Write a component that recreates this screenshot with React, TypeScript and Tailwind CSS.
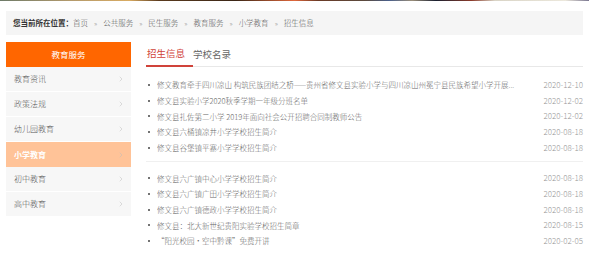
import { ChevronRight } from "lucide-react";

const crumbs = ["首页", "公共服务", "民生服务", "教育服务", "小学教育", "招生信息"];

const menu = ["教育资讯", "政策法规", "幼儿园教育", "小学教育", "初中教育", "高中教育"];

const groupA = [
  ["修文教育牵手四川凉山 构筑民族团结之桥——贵州省修文县实验小学与四川凉山州冕宁县民族希望小学开展...", "2020-12-10"],
  ["修文县实验小学2020秋季学期一年级分班名单", "2020-12-02"],
  ["修文县扎佐第二小学 2019年面向社会公开招聘合同制教师公告", "2020-12-02"],
  ["修文县六桶镇凉井小学学校招生简介", "2020-08-18"],
  ["修文县谷堡镇平寨小学学校招生简介", "2020-08-18"],
];

const groupB = [
  ["修文县六广镇中心小学学校招生简介", "2020-08-18"],
  ["修文县六广镇广田小学学校招生简介", "2020-08-18"],
  ["修文县六广镇德政小学学校招生简介", "2020-08-18"],
  ["修文县：北大新世纪贵阳实验学校招生简章", "2020-08-15"],
  ["“阳光校园·空中黔课”免费开讲", "2020-02-05"],
];

function NewsRow({ title, date }: { title: string; date: string }) {
  return (
    <li className="flex h-[15.7px] items-center">
      <span className="ml-[2px] mr-[7px] size-[2px] shrink-0 rounded-full bg-[#444]" />
      <span className="min-w-0 flex-1 truncate text-[7.5px] font-light text-[#666]">{title}</span>
      <span className="shrink-0 pl-4 text-[8px] font-light text-[#999]">{date}</span>
    </li>
  );
}

export default function App() {
  return (
    <div className="h-[255px] w-[589px] overflow-hidden bg-white font-['Noto_Sans_CJK_SC','Noto_Sans',sans-serif]">
      <div className="h-px bg-[linear-gradient(90deg,#6d7a68_0%,#b49a6c_12%,#d9ab62_22%,#5a3a1e_27%,#3b2616_40%,#e0683c_50%,#6a3a26_54%,#5b4a3e_62%,#4a5f8a_66%,#9a8e7a_70%,#1a2030_74%,#8a3a2a_80%,#d9d4c6_84%,#ece8dc_96%,#7a7690_100%)]" />

      <div className="mx-[6px] mt-[10px] flex h-6 items-center bg-[#f5f5f5] px-[7px] text-[7.5px]">
        <span className="font-bold text-[#333]">您当前所在位置：</span>
        {crumbs.map((c, i) => (
          <span key={c} className="flex items-center font-light text-[#555]">
            {i > 0 && <span className="px-[6px] text-[7px] text-[#888]">»</span>}
            {c}
          </span>
        ))}
      </div>

      <div className="mx-[6px] mt-[7px] flex gap-[15px]">
        <aside className="w-[125px] shrink-0">
          <div className="flex h-[25px] items-center justify-center bg-[#ff6600] text-[8.5px] text-white">
            教育服务
          </div>
          <ul>
            {menu.map((m) => {
              const active = m === "小学教育";
              return (
                <li
                  key={m}
                  className={
                    active
                      ? "flex h-[25px] items-center justify-between bg-[#ffc398] pl-2 pr-[6px] text-[8px] font-bold text-white"
                      : "flex h-[25px] items-center justify-between border-b border-white bg-[#f7f7f7] pl-2 pr-[6px] text-[8px] font-light text-[#555]"
                  }
                >
                  {m}
                  <ChevronRight className="size-[8px] text-[#bdbdbd]" strokeWidth={1.5} />
                </li>
              );
            })}
          </ul>
        </aside>

        <main className="min-w-0 flex-1">
          <div className="flex h-[25px] items-stretch border-b border-[#e8e8e8]">
            <span className="-mb-px flex items-center border-b-2 border-[#d0433a] pl-px pr-2 text-[9.5px] text-[#d0433a]">
              招生信息
            </span>
            <span className="flex items-center text-[9.5px] text-[#666]">学校名录</span>
          </div>

          <ul className="mt-[10px]">
            {groupA.map(([t, d]) => (
              <NewsRow key={t} title={t} date={d} />
            ))}
          </ul>
          <div className="mt-[6px] h-px bg-[#f0f0f0]" />
          <ul className="mt-2">
            {groupB.map(([t, d]) => (
              <NewsRow key={t} title={t} date={d} />
            ))}
          </ul>
        </main>
      </div>
    </div>
  );
}
